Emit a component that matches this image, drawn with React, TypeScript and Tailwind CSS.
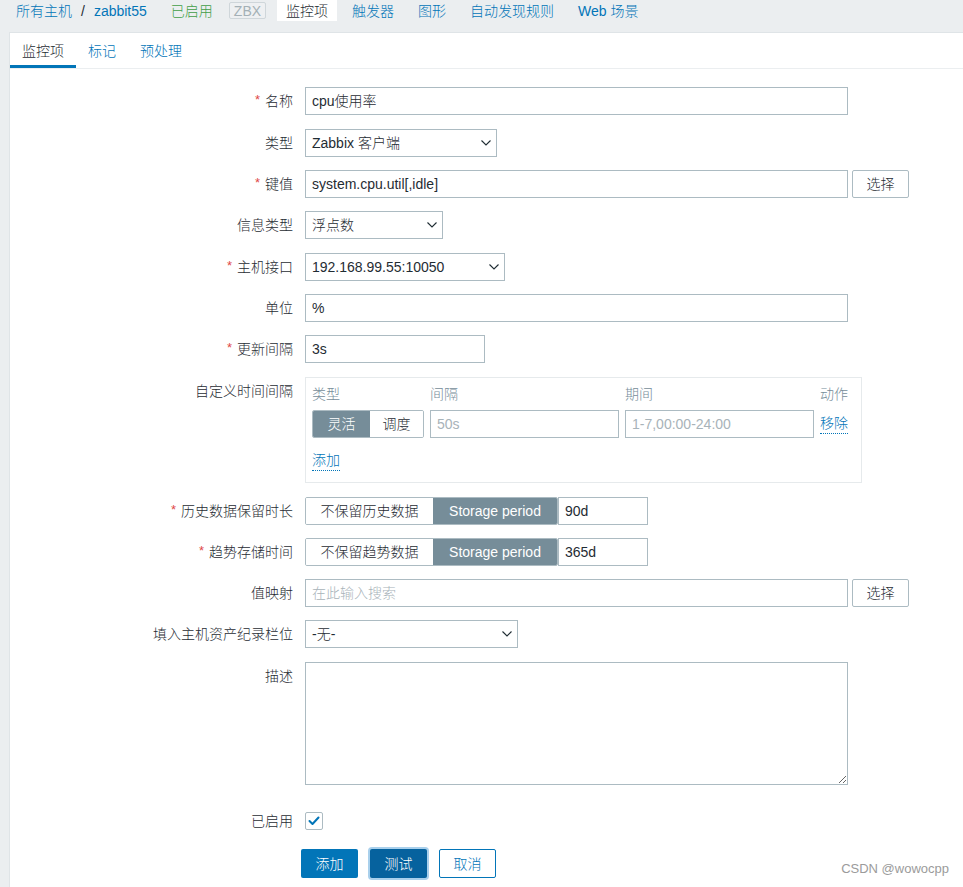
import React from 'react';

const Chevron = () => (
  <svg width="10" height="6" viewBox="0 0 10 6" className="shrink-0">
    <polyline points="0.5,0.5 5,5 9.5,0.5" fill="none" stroke="#1f2c33" strokeWidth="1.1" />
  </svg>
);

function Label({ children, req }: { children: React.ReactNode; req?: boolean }) {
  return (
    <div className="w-[283px] h-[28px] shrink-0 flex items-center justify-end text-[#1f2c33] whitespace-nowrap">
      {req && <span className="text-[#e04848] mr-[5px] text-[13px] relative -top-[1px]">*</span>}
      {children}
    </div>
  );
}

function Row({
  label,
  req,
  mt,
  children,
}: {
  label: React.ReactNode;
  req?: boolean;
  mt: string;
  children: React.ReactNode;
}) {
  return (
    <div className={`flex items-start gap-[12px] ${mt}`}>
      <Label req={req}>{label}</Label>
      <div className="flex items-start">{children}</div>
    </div>
  );
}

function Input({ w, children, ph }: { w: string; children?: React.ReactNode; ph?: boolean }) {
  return (
    <div
      className={`${w} h-[28px] border border-[#acbbc2] bg-white px-[6px] flex items-center whitespace-nowrap ${
        ph ? 'text-[#a8b3b9]' : 'text-[#1f2c33]'
      }`}
    >
      {children}
    </div>
  );
}

function Select({ w, children }: { w: string; children: React.ReactNode }) {
  return (
    <div
      className={`${w} h-[28px] border border-[#acbbc2] bg-white pl-[6px] pr-[5px] flex items-center justify-between text-[#1f2c33] whitespace-nowrap`}
    >
      <span>{children}</span>
      <Chevron />
    </div>
  );
}

function PickButton() {
  return (
    <div className="ml-[4px] w-[57px] h-[28px] border border-[#acbbc2] rounded-[2px] bg-white flex items-center justify-center text-[#1f2c33]">
      选择
    </div>
  );
}

export default function App() {
  return (
    <div className="relative w-[963px] h-[887px] overflow-hidden bg-[#ebeef0] font-['Liberation_Sans','Noto_Sans_CJK_SC',sans-serif] font-light text-sm">
      {/* Top navigation */}
      <div className="h-[32px] flex items-start pl-[16px] whitespace-nowrap">
        <div className="h-[21px] flex items-center text-[#0275b8]">
          <span>所有主机</span>
          <span className="mx-[9px] text-[#1f2c33]">/</span>
          <span>zabbit55</span>
        </div>
        <div className="h-[21px] flex items-center ml-[24px] text-[#429e47]">已启用</div>
        <div className="ml-[16px] mt-[2px] h-[17px] px-[4px] flex items-center border border-[#cfd6da] bg-[#eef0f2] rounded-[2px] text-[#a4b0b6]">
          ZBX
        </div>
        <div className="ml-[11px] flex items-start">
          <div className="h-[21px] px-[9px] flex items-center bg-white text-[#1f2c33]">监控项</div>
          <div className="h-[21px] px-[9px] ml-[6px] flex items-center text-[#0275b8]">触发器</div>
          <div className="h-[21px] px-[9px] ml-[6px] flex items-center text-[#0275b8]">图形</div>
          <div className="h-[21px] px-[9px] ml-[6px] flex items-center text-[#0275b8]">自动发现规则</div>
          <div className="h-[21px] px-[9px] ml-[6px] flex items-center text-[#0275b8]">Web 场景</div>
        </div>
      </div>

      {/* Card */}
      <div className="ml-[9px] h-[855px] bg-white border-l border-t border-[#dfe4e7]">
        {/* Tabs */}
        <div className="flex border-b border-[#ebeef0]">
          <div className="h-[35px] px-[12px] flex items-center text-[#1f2c33] shadow-[inset_0_-3px_0_#0275b8]">
            监控项
          </div>
          <div className="h-[35px] px-[12px] flex items-center text-[#0275b8]">标记</div>
          <div className="h-[35px] px-[12px] flex items-center text-[#0275b8]">预处理</div>
        </div>

        {/* Form */}
        <div className="pt-[18px] flex flex-col">
          <Row label="名称" req mt="mt-0">
            <Input w="w-[543px]">cpu使用率</Input>
          </Row>
          <Row label="类型" mt="mt-[14px]">
            <Select w="w-[192px]">Zabbix 客户端</Select>
          </Row>
          <Row label="键值" req mt="mt-[13px]">
            <Input w="w-[543px]">system.cpu.util[,idle]</Input>
            <PickButton />
          </Row>
          <Row label="信息类型" mt="mt-[13px]">
            <Select w="w-[138px]">浮点数</Select>
          </Row>
          <Row label="主机接口" req mt="mt-[14px]">
            <Select w="w-[200px]">192.168.99.55:10050</Select>
          </Row>
          <Row label="单位" mt="mt-[13px]">
            <Input w="w-[543px]">%</Input>
          </Row>
          <Row label="更新间隔" req mt="mt-[13px]">
            <Input w="w-[180px]">3s</Input>
          </Row>
          <Row label="自定义时间间隔" mt="mt-[14px]">
            <div className="w-[557px] border border-[#e6eaec] pt-[6px] pl-[6px] pb-[11px]">
              <div className="h-[20px] flex items-center text-[#768d99]">
                <div className="w-[118px]">类型</div>
                <div className="w-[195px]">间隔</div>
                <div className="w-[195px]">期间</div>
                <div>动作</div>
              </div>
              <div className="mt-[6px] h-[28px] flex items-center">
                <div className="w-[112px] h-[28px] flex border border-[#acbbc2] rounded-[2px] overflow-hidden">
                  <div className="w-[57px] bg-[#768d99] text-white flex items-center justify-center">灵活</div>
                  <div className="flex-1 bg-white text-[#1f2c33] flex items-center justify-center">调度</div>
                </div>
                <div className="ml-[6px]">
                  <Input w="w-[189px]" ph>50s</Input>
                </div>
                <div className="ml-[6px]">
                  <Input w="w-[189px]" ph>1-7,00:00-24:00</Input>
                </div>
                <div className="ml-[6px] h-[28px] flex items-center">
                  <span className="text-[#0275b8] leading-[19px] border-b border-dotted border-[#0275b8]">移除</span>
                </div>
              </div>
              <div className="mt-[13px] h-[20px] flex items-center">
                <span className="text-[#0275b8] leading-[19px] border-b border-dotted border-[#0275b8]">添加</span>
              </div>
            </div>
          </Row>
          <Row label="历史数据保留时长" req mt="mt-[14px]">
            <div className="h-[28px] flex border border-[#acbbc2] rounded-[2px] overflow-hidden">
              <div className="w-[127px] bg-white text-[#1f2c33] flex items-center justify-center">不保留历史数据</div>
              <div className="w-[124px] bg-[#768d99] text-white flex items-center justify-center">Storage period</div>
            </div>
            <Input w="w-[90px]">90d</Input>
          </Row>
          <Row label="趋势存储时间" req mt="mt-[13px]">
            <div className="h-[28px] flex border border-[#acbbc2] rounded-[2px] overflow-hidden">
              <div className="w-[127px] bg-white text-[#1f2c33] flex items-center justify-center">不保留趋势数据</div>
              <div className="w-[124px] bg-[#768d99] text-white flex items-center justify-center">Storage period</div>
            </div>
            <Input w="w-[90px]">365d</Input>
          </Row>
          <Row label="值映射" mt="mt-[13px]">
            <Input w="w-[543px]" ph>在此输入搜索</Input>
            <PickButton />
          </Row>
          <Row label="填入主机资产纪录栏位" mt="mt-[13px]">
            <Select w="w-[213px]">-无-</Select>
          </Row>
          <Row label="描述" mt="mt-[14px]">
            <textarea
              readOnly
              className="block w-[543px] h-[123px] border border-[#acbbc2] bg-white resize outline-none"
            />
          </Row>
          <Row label="已启用" mt="mt-[22px]">
            <div className="h-[28px] flex items-center">
              <div className="w-[18px] h-[18px] border border-[#acbbc2] rounded-[2px] bg-white flex items-center justify-center">
                <svg width="12" height="10" viewBox="0 0 12 10">
                  <polyline
                    points="1.5,5 4.5,8 10.5,1.5"
                    fill="none"
                    stroke="#0275b8"
                    strokeWidth="2"
                    strokeLinecap="round"
                    strokeLinejoin="round"
                  />
                </svg>
              </div>
            </div>
          </Row>
          <div className="mt-[14px] pl-[291px] flex items-center">
            <div className="w-[57px] h-[29px] rounded-[2px] bg-[#0275b8] text-white flex items-center justify-center">添加</div>
            <div className="ml-[12px] w-[57px] h-[29px] rounded-[2px] bg-[#06629e] text-white flex items-center justify-center ring-2 ring-[#a9d0ec]">
              测试
            </div>
            <div className="ml-[12px] w-[57px] h-[29px] rounded-[2px] bg-white border border-[#0275b8] text-[#0275b8] flex items-center justify-center">
              取消
            </div>
          </div>
        </div>
      </div>

      {/* Watermark */}
      <div className="absolute right-[14px] bottom-[8px] text-[13px] text-[#9b9b9b] whitespace-nowrap">CSDN @wowocpp</div>
    </div>
  );
}
